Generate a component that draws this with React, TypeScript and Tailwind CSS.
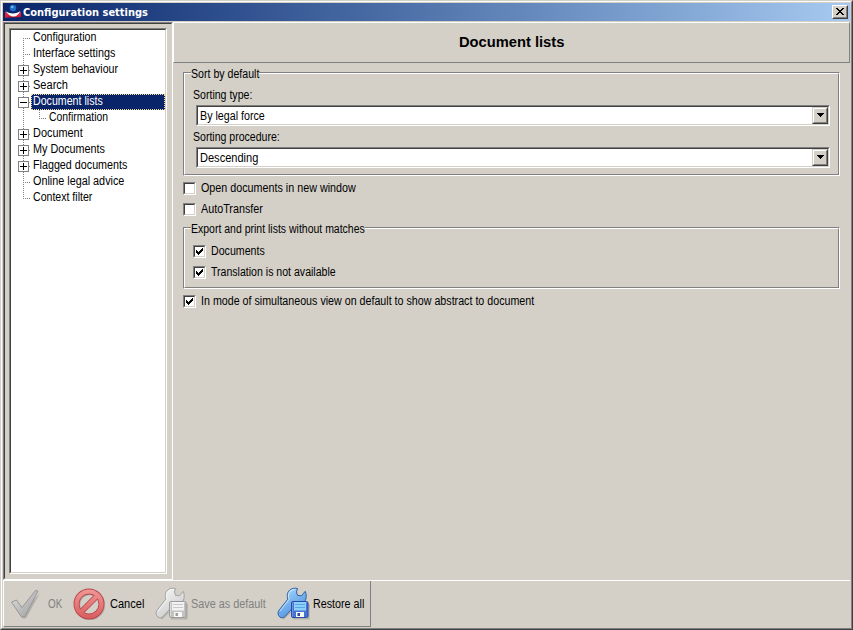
import { useLayoutEffect, useRef, useState } from "react";
import type { ReactNode } from "react";

/* A single-line caption whose glyphs are condensed to the width of its box. */
function Label({ children, className }: { children: ReactNode; className: string }) {
  const outer = useRef<HTMLSpanElement>(null);
  const inner = useRef<HTMLSpanElement>(null);
  const [scale, setScale] = useState(1);
  useLayoutEffect(() => {
    if (outer.current && inner.current) {
      setScale(outer.current.offsetWidth / inner.current.offsetWidth);
    }
  }, []);
  return (
    <span ref={outer} className={`block shrink-0 whitespace-nowrap ${className}`}>
      <span ref={inner} className="inline-block origin-left" style={{ transform: `scaleX(${scale})` }}>
        {children}
      </span>
    </span>
  );
}

type Node = { text: string; w: string; kind: "leaf" | "plus" | "minus" | "child" | "last"; selected?: boolean };

const nodes: Node[] = [
  { text: "Configuration", w: "w-[63px]", kind: "leaf" },
  { text: "Interface settings", w: "w-[82px]", kind: "leaf" },
  { text: "System behaviour", w: "w-[85px]", kind: "plus" },
  { text: "Search", w: "w-[35px]", kind: "plus" },
  { text: "Document lists", w: "w-[70px]", kind: "minus", selected: true },
  { text: "Confirmation", w: "w-[59px]", kind: "child" },
  { text: "Document", w: "w-[50px]", kind: "plus" },
  { text: "My Documents", w: "w-[72px]", kind: "plus" },
  { text: "Flagged documents", w: "w-[94px]", kind: "plus" },
  { text: "Online legal advice", w: "w-[91px]", kind: "leaf" },
  { text: "Context filter", w: "w-[59px]", kind: "last" },
];

function Branch({ kind, first }: { kind: Node["kind"]; first: boolean }) {
  const end = kind === "last" ? 9 : 16;
  const box = kind === "plus" || kind === "minus";
  const child = kind === "child";
  return (
    <svg className="block shrink-0" width={child ? 36 : 20} height="16" shapeRendering="crispEdges" fill="none">
      <path d={`M12.5 ${first ? 8 : 0}V${end}`} stroke="#808080" strokeDasharray="1 1" />
      {child ? (
        <path d="M28.5 0V9M28 8.5H35" stroke="#808080" strokeDasharray="1 1" />
      ) : (
        <path d="M12 8.5H20" stroke="#808080" strokeDasharray="1 1" />
      )}
      {box && (
        <>
          <rect x="7.5" y="3.5" width="10" height="10" fill="#fff" stroke="#808080" />
          <path d={kind === "plus" ? "M9 8.5H16M12.5 5V12" : "M9 8.5H16"} stroke="#000" />
        </>
      )}
    </svg>
  );
}

const sunken =
  "border border-t-[#808080] border-l-[#808080] border-r-white border-b-white";
const sunkenInner =
  "border border-t-[#404040] border-l-[#404040] border-r-[#d4d0c8] border-b-[#d4d0c8]";

function Check({ on, label, w }: { on?: boolean; label: string; w: string }) {
  return (
    <div className="flex h-[13px] items-center">
      <span className={`block size-[13px] shrink-0 ${sunken}`}>
        <span className={`block size-[11px] bg-white ${sunkenInner}`}>
          {on && (
            <svg className="block" width="9" height="9" shapeRendering="crispEdges">
              <path d="M1 3h1v1h1v1h1v-1h1v-1h1v-1h1v-1h1v3h-1v1h-1v1h-1v1h-1v1h-1v-1h-1v-1h-1z" fill="#000" />
            </svg>
          )}
        </span>
      </span>
      <Label className={`ml-[5px] leading-[13px] ${w}`}>{label}</Label>
    </div>
  );
}

function Select({ value, w }: { value: string; w: string }) {
  return (
    <div className={`ml-[3px] h-[21px] w-[634px] ${sunken}`}>
      <div className={`flex h-[19px] bg-white ${sunkenInner}`}>
        <Label className={`ml-[2px] leading-[18px] ${w}`}>{value}</Label>
        <span className="ml-auto block h-[17px] w-4 border border-t-[#d4d0c8] border-l-[#d4d0c8] border-r-[#404040] border-b-[#404040]">
          <span className="flex h-[15px] w-[14px] justify-center border border-t-white border-l-white border-r-[#808080] border-b-[#808080] bg-[#d4d0c8] pt-[4px]">
            <svg width="7" height="4" shapeRendering="crispEdges">
              <path d="M0 0h7v1h-1v1h-1v1h-1v1h-1v-1h-1v-1h-1v-1h-1z" />
            </svg>
          </span>
        </span>
      </div>
    </div>
  );
}

function Group({ title, legend, className, children }: { title: string; legend: string; className: string; children: ReactNode }) {
  return (
    <section className={`w-[657px] border border-t-[#808080] border-l-[#808080] border-r-white border-b-white ${className}`}>
      <div className="h-full border border-t-white border-l-white border-r-[#808080] border-b-[#808080] pl-[8px]">
        <div className={`-mt-[8px] -ml-[2px] h-[16px] bg-[#d4d0c8] ${legend}`}>
          <Label className="w-full leading-[16px]">{title}</Label>
        </div>
        {children}
      </div>
    </section>
  );
}

function WrenchDisk({ active }: { active?: boolean }) {
  const c = active
    ? { edge: "#2f62a8", a: "#a9dbff", b: "#3f83d8", disk: "#4672d4", dedge: "#2b4aa3", label: "#8fd0fb", line: "#5aa5e6", shade: "#6b92e6" }
    : { edge: "#a2a2a2", a: "#f6f6f6", b: "#c6c6c6", disk: "#c2c2c2", dedge: "#9c9c9c", label: "#f2f2f2", line: "#c8c8c8", shade: "#dadada" };
  const id = active ? "wrench-on" : "wrench-off";
  return (
    <svg className="block shrink-0" width="34" height="34" viewBox="0 0 34 34">
      <defs>
        <linearGradient id={id} x1="0.2" y1="0" x2="0.8" y2="1">
          <stop offset="0" stopColor={c.a} />
          <stop offset="1" stopColor={c.b} />
        </linearGradient>
      </defs>
      <path d="M4 30l3 2.500 8-8 1 8h16.500l.5-15-3-2z" fill="#666" opacity=".28" />
      <path
        d="M20.500 1.500C14.500 0 9.800 4 10.300 9.500c.1 1 .2 1.800.5 2.700L1.800 23.500c-1.500 2.200-.8 5 1 6.500 1.700 1.200 3.700 1.200 5.200-.5L18.500 18c5 .8 9.500-2 10.500-6.500.5-2.700.2-5-.8-7.200L24.500 8.800l-4-.5-1-3.300z"
        fill={`url(#${id})`}
        stroke={c.edge}
        strokeLinejoin="round"
      />
      <path d="M18 2.500c-4 0-6.800 3-6.600 6.500l.6 3.500L3 24" fill="none" stroke="#fff" strokeOpacity=".6" />
      <rect x="14.500" y="14.500" width="16.500" height="16" rx="1.500" fill={c.disk} stroke={c.dedge} />
      <path d="M15.500 29.500V15.500H30" fill="none" stroke={c.shade} />
      <rect x="17" y="15" width="12" height="8.500" fill={c.label} />
      <path d="M18 17.500h10M18 20.500h10" stroke={c.line} />
      <rect x="19" y="25" width="8" height="5" fill="#f8f8f8" />
      <rect x="20.500" y="26" width="2.500" height="3" fill={c.dedge} />
    </svg>
  );
}

export default function App() {
  return (
    <div className="h-[630px] w-[853px] overflow-hidden border border-t-[#d4d0c8] border-l-[#d4d0c8] border-r-[#404040] border-b-[#404040] bg-[#d4d0c8] font-['Liberation_Sans',Arial,sans-serif] text-[12px] text-black">
      <div className="flex h-[628px] flex-col border border-t-white border-l-white border-r-[#808080] border-b-[#808080] px-px pt-px pb-px">
        <header className="flex h-[18px] shrink-0 items-center bg-linear-to-r from-[#0a246a] to-[#a6caf0] pr-[2px]">
          <svg className="ml-[2px] block" width="17" height="16" viewBox="0 0 17 16">
            <path d="M0 7.500L6 12 0 13.500zM16 7.500L10.500 12l5.500.5z" fill="#e0203a" />
            <path d="M0 13c5-1.500 11-1 16-1.500V13c-5 .3-11 .3-16 1z" fill="#d01c34" />
            <path d="M.5 7c3 3 11 3.500 15 0-1.500 3.500-4 5.500-7 5.500S2.500 10.500.500 7z" fill="#fff" />
            <circle cx="8" cy="4" r="3.300" fill="#1f6fc4" />
            <circle cx="7.200" cy="3" r="1.300" fill="#6db8ee" />
          </svg>
          <Label className="ml-px w-[125px] font-['DejaVu_Sans',sans-serif] text-[11px] leading-[18px] pt-px font-bold text-white">
            Configuration settings
          </Label>
          <button className="ml-auto block h-[14px] w-4 border border-t-white border-l-white border-r-[#404040] border-b-[#404040] bg-[#d4d0c8]">
            <span className="flex h-3 w-[14px] justify-center border border-t-[#d4d0c8] border-l-[#d4d0c8] border-r-[#808080] border-b-[#808080] pt-px">
              <svg width="8" height="7" shapeRendering="crispEdges">
                <path d="M0 0h2v1h1v1h2v-1h1v-1h2v1h-1v1h-1v1h-1v1h1v1h1v1h1v1h-2v-1h-1v-1h-2v1h-1v1h-2v-1h1v-1h1v-1h1v-1h-1v-1h-1v-1h-1z" />
              </svg>
            </span>
          </button>
        </header>

        <div className="mt-px flex h-[558px] shrink-0">
          <aside className={`h-[558px] w-[170px] shrink-0 ${sunken}`}>
            <div className="h-[556px] border border-t-[#404040] border-l-[#404040] border-r-[#d4d0c8] border-b-[#d4d0c8] pt-[4px] pl-[4px]">
              <div className={`h-[546px] w-[158px] ${sunken}`}>
                <ul className={`h-[544px] bg-white ${sunkenInner}`}>
                  {nodes.map((n, i) => (
                    <li key={n.text} className="flex h-4">
                      <Branch kind={n.kind} first={i === 0} />
                      <div
                        className={
                          n.selected
                            ? "flex h-4 grow border border-dotted border-[#f5db95] bg-[#0a246a] pl-px text-white"
                            : "flex h-4 grow border border-transparent pl-px"
                        }
                      >
                        <Label className={`leading-[13px] ${n.w}`}>{n.text}</Label>
                      </div>
                    </li>
                  ))}
                </ul>
              </div>
            </div>
          </aside>

          <main className="w-[677px]">
            <h1 className="flex h-[41px] justify-center border border-t-white border-l-white border-r-[#808080] border-b-[#808080]">
              <Label className="w-[105px] text-[14px] leading-[38px] font-bold">Document lists</Label>
            </h1>
            <div className="pt-[9px] pl-[10px]">
              <Group title="Sort by default" legend="w-[68px]" className="h-[104px]">
                <Label className="mt-[6px] w-[59px] leading-[14px]">Sorting type:</Label>
                <div className="h-[3px]" />
                <Select value="By legal force" w="w-[65px]" />
                <Label className="mt-[4px] w-[87px] leading-[14px]">Sorting procedure:</Label>
                <div className="h-[3px]" />
                <Select value="Descending" w="w-[58px]" />
              </Group>
              <div className="mt-[6px] mb-[11px] flex flex-col gap-2">
                <Check label="Open documents in new window" w="w-[155px]" />
                <Check label="AutoTransfer" w="w-[62px]" />
              </div>
              <Group title="Export and print lists without matches" legend="w-[174px]" className="h-[62px]">
                <div className="mt-[8px] flex flex-col gap-2">
                  <Check on label="Documents" w="w-[54px]" />
                  <Check on label="Translation is not available" w="w-[125px]" />
                </div>
              </Group>
              <div className="mt-[6px]">
                <Check on label="In mode of simultaneous view on default to show abstract to document" w="w-[333px]" />
              </div>
            </div>
          </main>
        </div>

        <footer className="flex h-[47px] shrink-0 border-t border-white">
          <div className="flex h-[46px] w-[368px] items-center border-r border-b border-l border-r-[#808080] border-b-[#808080] border-l-white pl-[6px]">
            <svg className="block shrink-0" width="32" height="32" viewBox="0 0 32 32">
              <defs>
                <linearGradient id="tick" x1="0" y1="0" x2="1" y2="1">
                  <stop offset="0" stopColor="#e2e2e2" />
                  <stop offset="1" stopColor="#9a9a9a" />
                </linearGradient>
              </defs>
              <path d="M3 16l9.500 14.500h3.500L30 5 14 22z" fill="#666" opacity=".3" />
              <path d="M1.500 14l5-2 5.500 7.500L25.500 2.500l2.500.5-13 25.500-3.500.5z" fill="url(#tick)" stroke="#989898" strokeLinejoin="round" />
            </svg>
            <Label className="ml-[6px] w-[14px] text-[#808080]">OK</Label>
            <svg className="ml-[11px] block shrink-0" width="32" height="32" viewBox="0 0 32 32">
              <defs>
                <linearGradient id="stop" gradientUnits="userSpaceOnUse" x1="0" y1="0" x2="0" y2="32">
                  <stop offset="0" stopColor="#f29a98" />
                  <stop offset="1" stopColor="#d85a5c" />
                </linearGradient>
              </defs>
              <g fill="none">
                <circle cx="17" cy="17" r="12.500" stroke="#666" strokeOpacity=".3" strokeWidth="5.500" />
                <circle cx="16" cy="16" r="12.500" stroke="#b5474a" strokeWidth="6" />
                <path d="M8 24L24 8" stroke="#b5474a" strokeWidth="6" />
                <circle cx="16" cy="16" r="12.500" stroke="url(#stop)" strokeWidth="4.200" />
                <path d="M7 25L25 7" stroke="url(#stop)" strokeWidth="4.200" />
              </g>
            </svg>
            <Label className="ml-[5px] w-[34px]">Cancel</Label>
            <div className="ml-[11px]"><WrenchDisk /></div>
            <Label className="ml-[2px] w-[75px] text-[#808080]">Save as default</Label>
            <div className="ml-[11px]"><WrenchDisk active /></div>
            <Label className="ml-[2px] w-[51px]">Restore all</Label>
          </div>
        </footer>
      </div>
    </div>
  );
}
